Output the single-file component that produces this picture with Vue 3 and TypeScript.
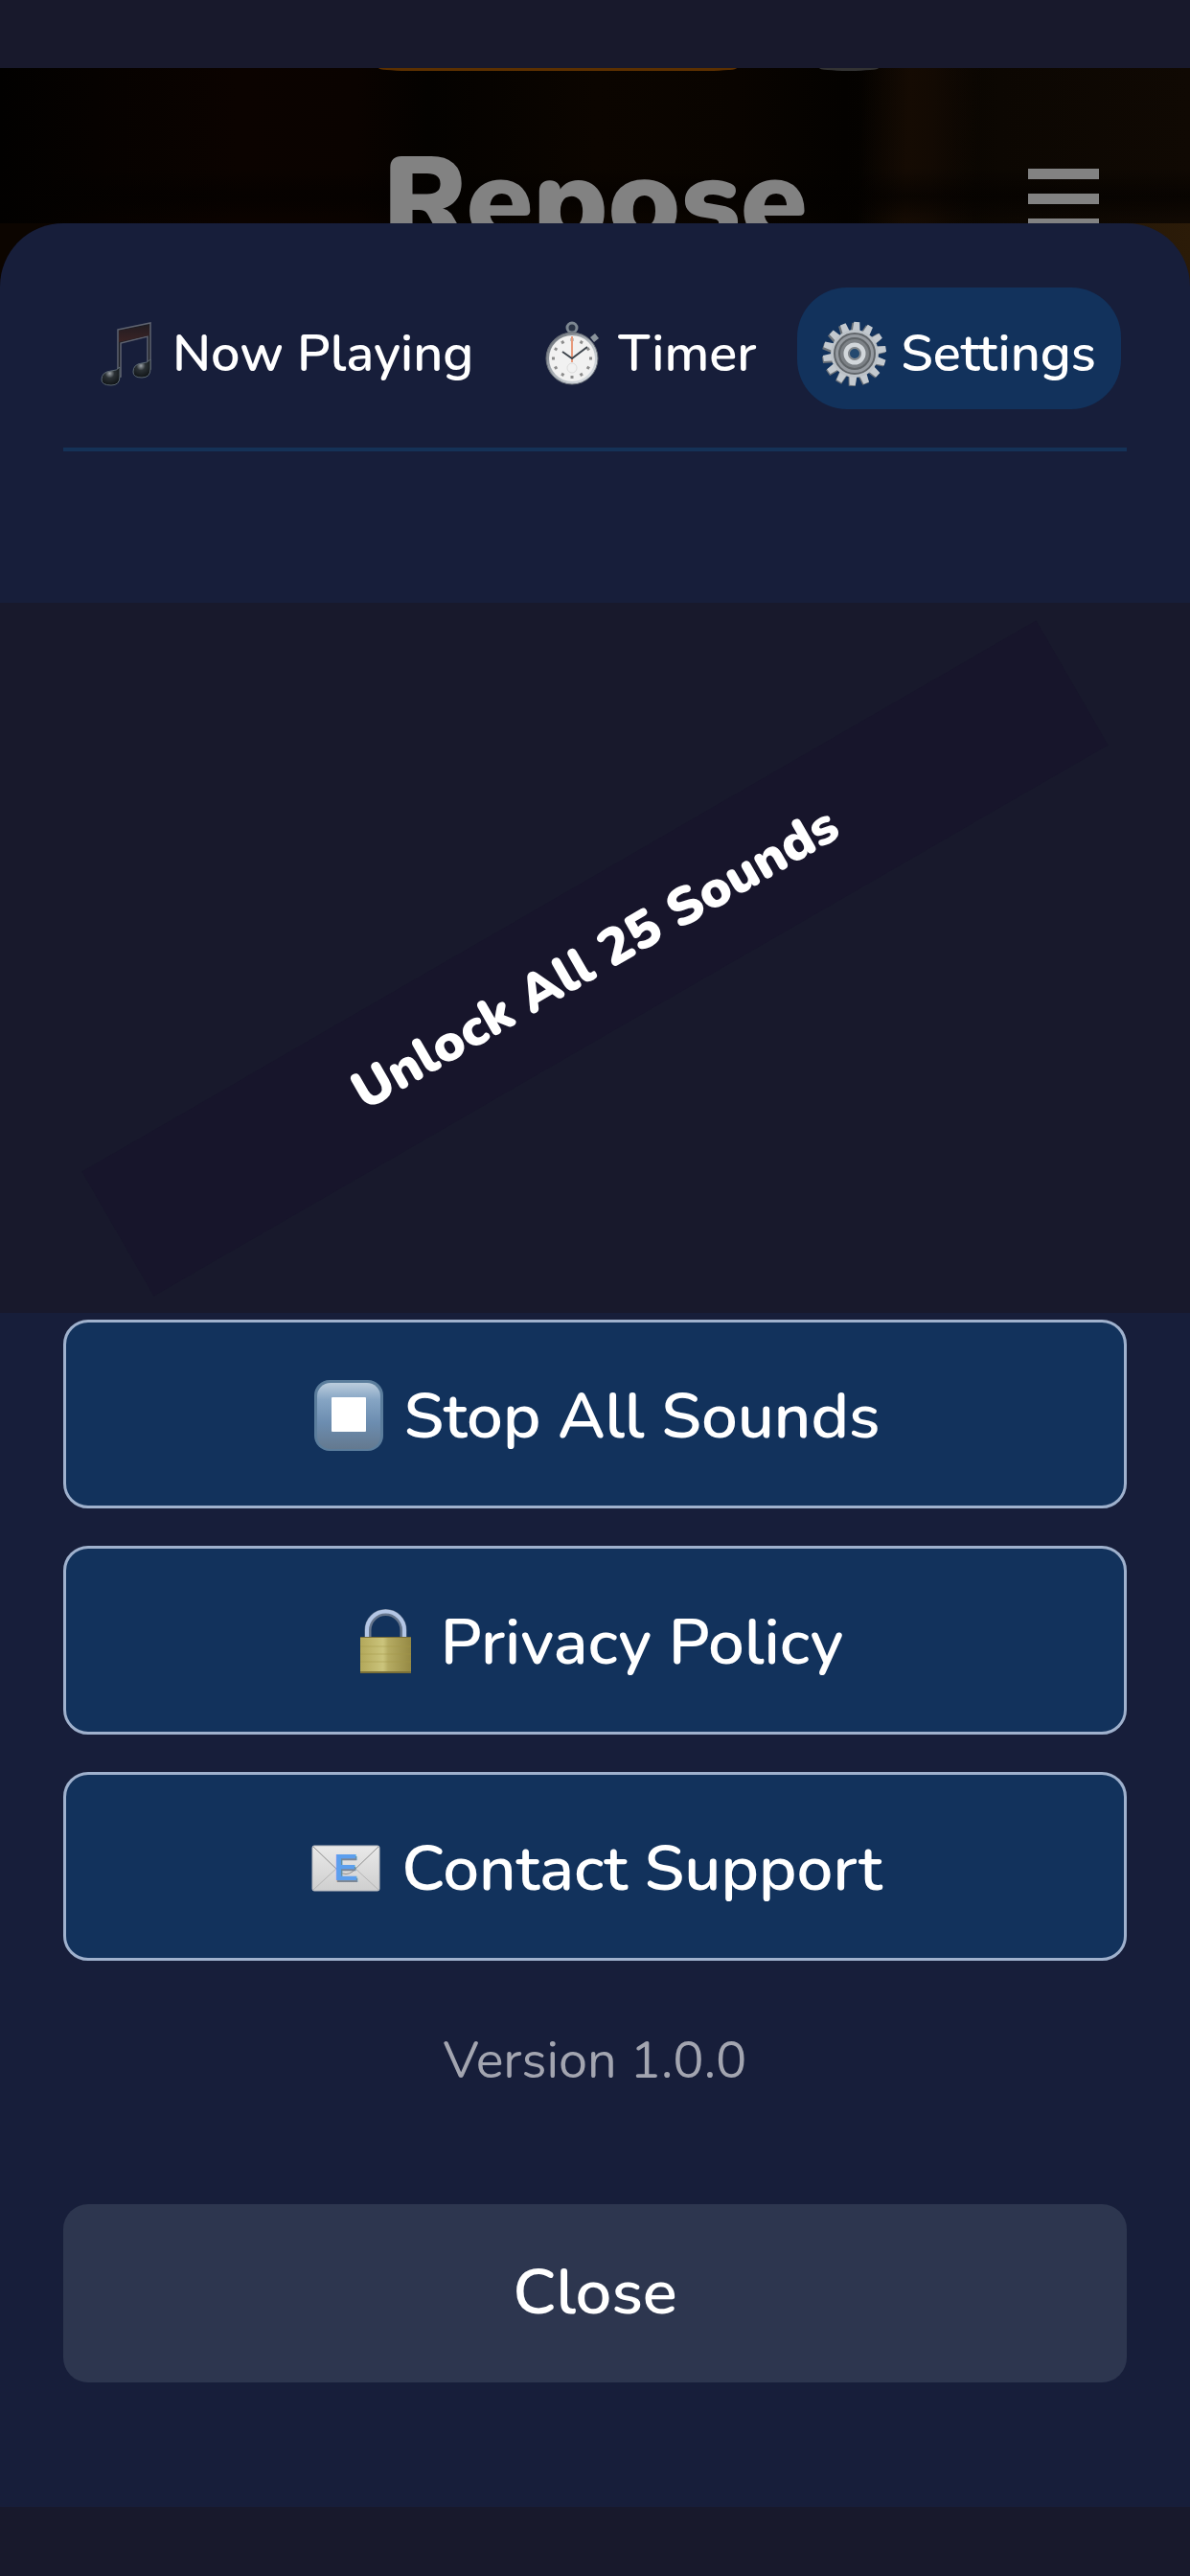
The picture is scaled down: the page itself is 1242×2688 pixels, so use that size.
<script setup lang="ts">
import { ref } from 'vue'

type TabId = 'playing' | 'timer' | 'settings'

const tabs: { id: TabId; label: string }[] = [
  { id: 'playing', label: 'Now Playing' },
  { id: 'timer', label: 'Timer' },
  { id: 'settings', label: 'Settings' },
]
const active = ref<TabId>('settings')

const gearTeeth = Array.from({ length: 14 }, (_, i) => (i * 360) / 14 + 4)
const watchTicks = Array.from({ length: 12 }, (_, i) => i * 30)
</script>

<template>
  <div class="app">
    <div class="status-bar"></div>
    <header class="scene">
      <div class="scene-peek">
        <span class="peek peek-orange"></span>
        <span class="peek peek-grey"></span>
      </div>
      <div class="scene-row">
        <h1 class="title">Repose</h1>
        <button class="menu" type="button" aria-label="Menu">
          <svg viewBox="0 0 74 64" width="74" height="64">
            <path d="M0 0h74v11H0zM0 26h74v11H0zM0 52h74v11H0z" fill="currentColor" />
          </svg>
        </button>
      </div>
    </header>

    <main class="sheet">
      <nav class="tabs">
        <button
          v-for="tab in tabs"
          :key="tab.id"
          type="button"
          class="tab"
          :class="{ active: tab.id === active }"
          @click="active = tab.id"
        >
          <svg v-if="tab.id === 'playing'" class="tab-icon" viewBox="0 0 68 68" aria-hidden="true">
            <defs>
              <linearGradient id="beam" x1="0" y1="0" x2="0" y2="1">
                <stop offset="0" stop-color="#231d22" />
                <stop offset="1" stop-color="#3b2324" />
              </linearGradient>
              <radialGradient id="head" cx="0.45" cy="0.35" r="0.65">
                <stop offset="0" stop-color="#9ba1a6" />
                <stop offset="0.4" stop-color="#2b3135" />
                <stop offset="1" stop-color="#101417" />
              </radialGradient>
            </defs>
            <path
              d="M25 9 59 2v48h-3V16L28 23v35h-3z"
              fill="#1b1d24"
              stroke="#5f6370"
              stroke-width="1.5"
            />
            <path d="M26 10 58 4v11L26 22z" fill="url(#beam)" />
            <path d="M8 61q0-8 10-9 6 0 9-4v10q0 9-9 9-10 0-10-6z" fill="url(#head)" stroke="#5b6771" />
            <path d="M41 53q0-8 9-9 6 0 9-4v10q0 9-9 9-9 0-9-6z" fill="url(#head)" stroke="#5b6771" />
          </svg>
          <svg v-else-if="tab.id === 'timer'" class="tab-icon" viewBox="0 0 68 68" aria-hidden="true">
            <defs>
              <linearGradient id="rim" x1="0" y1="0" x2="1" y2="1">
                <stop offset="0" stop-color="#5f656d" />
                <stop offset="0.5" stop-color="#aeb4ba" />
                <stop offset="1" stop-color="#e6ebef" />
              </linearGradient>
            </defs>
            <circle cx="34" cy="7" r="5" fill="#2a3345" stroke="#7d8791" stroke-width="3" />
            <path d="m53 17 5-4 4 5-5 4z" fill="#8b949c" />
            <circle cx="34" cy="39" r="27" fill="url(#rim)" stroke="#6a7079" />
            <circle cx="34" cy="39" r="24" fill="#f1f1f1" />
            <path
              v-for="a in watchTicks"
              :key="a"
              d="M34 18v3"
              stroke="#8c8c8c"
              stroke-width="3"
              :transform="`rotate(${a} 34 39)`"
            />
            <circle cx="34" cy="49" r="5" fill="none" stroke="#dcdcdc" />
            <path d="M34 16v27" stroke="#e89a7c" stroke-width="2" />
            <path d="m24 32 10 7 16-12" fill="none" stroke="#3d444c" stroke-width="2" />
          </svg>
          <svg v-else class="tab-icon" viewBox="0 0 68 68" aria-hidden="true">
            <g fill="#6d737a">
              <path
                v-for="a in gearTeeth"
                :key="a"
                d="M29 12 30 1h7l1 11z"
                :transform="`translate(-1 1) rotate(${a} 34 34)`"
              />
            </g>
            <g fill="#c3c9cf">
              <path
                v-for="a in gearTeeth"
                :key="a"
                d="M30 12 31 1h6l1 11z"
                :transform="`rotate(${a} 34 34)`"
              />
            </g>
            <circle cx="34" cy="34" r="25" fill="#bcc2c8" />
            <circle cx="34" cy="34" r="21" fill="#94999f" stroke="#61666b" stroke-width="2" />
            <circle cx="34" cy="34" r="16" fill="#7b8085" stroke="#5f6468" stroke-width="2" />
            <circle cx="34" cy="34" r="9" fill="#39506c" stroke="#d2d7db" stroke-width="5" />
            <circle cx="34" cy="34" r="6" fill="#24496f" stroke="#82878c" stroke-width="2" />
          </svg>
          <span>{{ tab.label }}</span>
        </button>
      </nav>

      <section class="promo">
        <a class="ribbon" href="#unlock">Unlock All 25 Sounds</a>
      </section>

      <div class="actions">
        <button class="action" type="button">
          <svg class="action-icon" viewBox="0 0 80 80" aria-hidden="true">
            <defs>
              <linearGradient id="key" x1="0" y1="0" x2="0" y2="1">
                <stop offset="0" stop-color="#bccddd" />
                <stop offset="0.25" stop-color="#86a5c4" />
                <stop offset="0.6" stop-color="#6c8db0" />
                <stop offset="1" stop-color="#64798f" />
              </linearGradient>
            </defs>
            <rect x="4" y="2" width="72" height="74" rx="16" fill="#5b7d9c" />
            <rect x="7" y="5" width="66" height="69" rx="14" fill="url(#key)" />
            <rect x="22" y="20" width="36" height="36" rx="1" fill="#fff" />
          </svg>
          <span>Stop All Sounds</span>
        </button>
        <button class="action" type="button">
          <svg class="action-icon" viewBox="0 0 80 80" aria-hidden="true">
            <defs>
              <linearGradient id="brass" x1="0" y1="0" x2="1" y2="0">
                <stop offset="0" stop-color="#b3a85a" />
                <stop offset="0.45" stop-color="#cbc47c" />
                <stop offset="0.55" stop-color="#b5ab62" />
                <stop offset="1" stop-color="#958944" />
              </linearGradient>
            </defs>
            <path d="M22 36V27a18 18 0 0 1 37 0v10" fill="none" stroke="#65758c" stroke-width="7" />
            <path d="M21 36V27a19 19 0 0 1 39 0v10" fill="none" stroke="#b3c6e6" stroke-width="4" />
            <rect x="14" y="34" width="53" height="38" rx="1" fill="url(#brass)" />
            <path d="M14 44h53M14 52h53M14 60h53" stroke="#a49a4a" stroke-opacity="0.5" />
            <path d="M14 34h53v1H14zM14 70h53v2H14z" fill="#7b7038" />
          </svg>
          <span>Privacy Policy</span>
        </button>
        <button class="action" type="button">
          <svg class="action-icon" viewBox="0 0 80 80" aria-hidden="true">
            <defs>
              <linearGradient id="paper" x1="0" y1="0" x2="0" y2="1">
                <stop offset="0" stop-color="#e9e9e9" />
                <stop offset="1" stop-color="#cfcfcf" />
              </linearGradient>
            </defs>
            <rect x="5" y="16" width="70" height="47" rx="2" fill="url(#paper)" stroke="#b9bcc2" />
            <path d="m6 62 26-24M74 62 48 38" stroke="#b5b5b5" stroke-width="1" />
            <path d="m6 17 27 26q7 5 14 0l27-26" fill="none" stroke="#8f8f8f" stroke-width="1" />
            <text x="41" y="54" class="mail-letter mail-shade">E</text>
            <text x="40" y="52" class="mail-letter">E</text>
          </svg>
          <span>Contact Support</span>
        </button>
      </div>

      <p class="version">Version 1.0.0</p>
      <button class="close" type="button">Close</button>
    </main>
    <div class="home-bar"></div>
  </div>
</template>

<style>
body {
  margin: 0;
  background: #18192c;
}
</style>

<style scoped>
.app {
  display: flex;
  flex-direction: column;
  min-height: 100vh;
  overflow: hidden;
  background: #18192c;
  color: #fff;
  font-family: Nunito, Lato, 'Open Sans', sans-serif;
}

button {
  margin: 0;
  border: 0;
  background: none;
  color: inherit;
  font-family: inherit;
  cursor: pointer;
}

.status-bar {
  height: 71px;
}

.home-bar {
  height: 72px;
}

.scene {
  height: 228px;
  background:
    linear-gradient(90deg, #0c0500 0%, #0c0500 50%, #2b1b08 100%) 0 162px / 100% 66px no-repeat,
    linear-gradient(0deg, transparent 70px, rgba(3, 1, 0, 0.6) 94px, transparent 124px),
    linear-gradient(92deg, transparent 72%, #150b03 76%, #130a03 78%, transparent 82%),
    linear-gradient(90deg, #020100 0%, #060200 8%, #0b0300 20%, #0a0300 30%, #040200 36%, #0b0500 50%, #090400 62%, #040200 71%, #0c0702 84%, #100903 100%);
}

.scene-peek {
  display: flex;
  justify-content: center;
  gap: 86px;
  height: 80px;
  padding-left: 70px;
}

.peek {
  height: 3px;
  border-radius: 0 0 30px 30px / 0 0 3px 3px;
}

.peek-orange {
  width: 374px;
  background: #5c3000;
}

.peek-grey {
  width: 62px;
  background: #333;
}

.scene-row {
  display: grid;
  grid-template-columns: 1fr auto 1fr;
  align-items: start;
  padding: 0 95px;
  color: #828282;
}

.title {
  grid-column: 2;
  margin: 0;
  font-size: 126px;
  font-weight: 900;
  line-height: 120px;
}

.menu {
  justify-self: end;
  height: 64px;
  margin-top: 25px;
  padding: 0;
}

.menu svg {
  display: block;
}

.sheet {
  position: relative;
  flex: 1;
  box-sizing: border-box;
  margin-top: -66px;
  padding: 67px 66px 130px;
  border-radius: 66px 66px 0 0;
  background: #171e3a;
}

.tabs {
  display: flex;
  justify-content: space-between;
  padding: 0 6px 40px;
  border-bottom: 4px solid #153257;
}

.tab {
  display: flex;
  align-items: center;
  gap: 14px;
  box-sizing: border-box;
  height: 127px;
  padding: 10px 26px 0;
  border-radius: 52px;
  font-size: 54px;
  font-weight: 600;
  line-height: 74px;
  white-space: nowrap;
}

.tab.active {
  background: #12325c;
}

.tab-icon {
  width: 68px;
  height: 68px;
}

.promo {
  display: flex;
  align-items: center;
  justify-content: center;
  height: 741px;
  margin: 158px -66px 7px;
  background: #18192c;
}

.ribbon {
  flex: 0 0 1150px;
  background: #17152b;
  color: #fff;
  font-size: 55px;
  font-weight: 900;
  line-height: 150px;
  text-align: center;
  text-decoration: none;
  transform: rotate(-30deg);
}

.actions {
  display: flex;
  flex-direction: column;
  gap: 39px;
}

.action {
  display: flex;
  align-items: center;
  justify-content: center;
  gap: 18px;
  box-sizing: border-box;
  height: 197px;
  padding: 4px 0 0;
  border: 3px solid #9fb1cd;
  border-radius: 26px;
  background: #12325c;
  font-size: 67px;
  font-weight: 600;
}

.action-icon {
  width: 80px;
  height: 80px;
}

.mail-letter {
  fill: #5c9fee;
  font-family: 'Liberation Sans', sans-serif;
  font-size: 38px;
  font-weight: 700;
  text-anchor: middle;
}

.mail-shade {
  fill: #7d8794;
}

.version {
  margin: 67px 0 113px;
  color: #a3a5b0;
  font-size: 54px;
  line-height: 74px;
  text-align: center;
}

.close {
  width: 100%;
  height: 186px;
  padding: 0 0 2px;
  border-radius: 26px;
  background: #2d364f;
  font-size: 67px;
  font-weight: 600;
}
</style>
